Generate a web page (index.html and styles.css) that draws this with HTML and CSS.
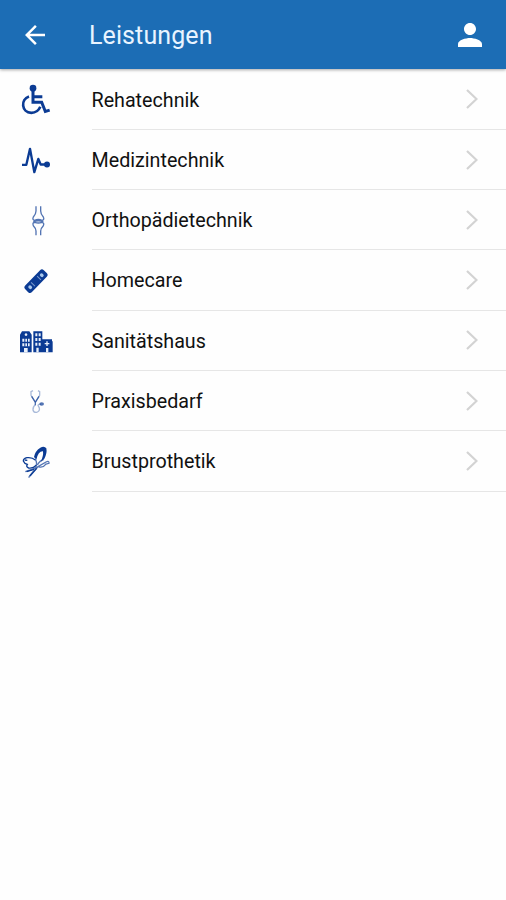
FILE: index.html
```html
<!DOCTYPE html>
<html lang="de">
<head>
    <meta charset="UTF-8">
    <title>Leistungen</title>
    <link rel="stylesheet" href="styles.css">
</head>
<body>
    <header class="toolbar">
        <svg class="back" viewBox="0 0 24 24"><path d="M20 11H7.830l5.590-5.590L12 4l-8 8 8 8 1.410-1.410L7.830 13H20v-2z"/></svg>
        <h1>Leistungen</h1>
        <svg class="user" viewBox="0 0 24 24"><path d="M12 12c2.210 0 4-1.790 4-4s-1.790-4-4-4-4 1.790-4 4 1.790 4 4 4zm0 2c-2.670 0-8 1.340-8 4v2h16v-2c0-2.660-5.330-4-8-4z"/></svg>
    </header>

    <ul class="services">
        <li>
            <svg class="icon" viewBox="0 -11.5 150 150">
                <circle class="fill" cx="69" cy="28" r="10"/>
                <path class="line" stroke-width="9" d="M69 34V70H95L106 98L119 94M70 54H97"/>
                <path class="line" stroke-width="8" d="M57 53C31 62 34 101 64 102Q83 102 91 84"/>
            </svg>
            <span class="name">Rehatechnik</span>
            <svg class="chevron" viewBox="0 0 12 20"><path d="M1 1l9.500 9L1 19"/></svg>
        </li>
        <li>
            <svg class="icon" viewBox="0 -9.500 150 150">
                <path class="line" stroke-width="7" stroke-linejoin="round" d="M36 80H49L60 32L73 102L85 62L92 79H108"/>
                <circle class="fill" cx="111" cy="79" r="9"/>
            </svg>
            <span class="name">Medizintechnik</span>
            <svg class="chevron" viewBox="0 0 12 20"><path d="M1 1l9.500 9L1 19"/></svg>
        </li>
        <li>
            <svg class="icon soft" viewBox="0 -9 150 150">
                <path class="line" stroke-width="4" d="M78 25V39Q78 48 70 57Q66 66 74 67Q85 61 96 67Q104 65 100 57Q92 48 92 39V25"/>
                <path class="line" stroke-width="4" d="M78 112V99Q78 91 70 83Q66 73 75 73Q85 77 95 73Q104 74 100 83Q92 91 92 99V112"/>
                <path class="line" stroke-width="5" d="M70 71Q85 65 100 71"/>
            </svg>
            <span class="name">Orthopädietechnik</span>
            <svg class="chevron" viewBox="0 0 12 20"><path d="M1 1l9.500 9L1 19"/></svg>
        </li>
        <li>
            <svg class="icon" viewBox="0 -7.500 150 150">
                <g transform="rotate(-46 78 68)">
                    <rect class="fill" x="38" y="54" width="80" height="28" rx="8"/>
                    <rect class="pale" x="48" y="62" width="10" height="12" rx="5"/>
                    <rect class="pale" x="98" y="62" width="10" height="12" rx="5"/>
                    <path class="gap" d="M65 60V76M91 60V76"/>
                </g>
            </svg>
            <span class="name">Homecare</span>
            <svg class="chevron" viewBox="0 0 12 20"><path d="M1 1l9.500 9L1 19"/></svg>
        </li>
        <li>
            <svg class="icon" viewBox="0 -8 150 150">
                <path class="fill" d="M30 48L36 38H58L65 48V101H30ZM70 38H97V101H70ZM95 62H126V68H128V101H95Z"/>
                <path class="white" d="M48 44a4 4 0 1 0 .1 0M37 60h22v9h-22zM37 74h22v9h-22zM42 88h11v13h-11z"/>
                <path class="fill" d="M43 58h3v26h-3zM51 58h3v26h-3z"/>
                <path class="white" d="M76 44h6v9h-6zM86 44h6v9h-6zM76 58h6v9h-6zM86 58h6v9h-6zM76 72h6v9h-6zM86 72h6v9h-6zM79 87h7v14h-7z"/>
                <path class="white" d="M109 68h4v5h5v4h-5v5h-4v-5h-5v-4h5zM108 88h7v13h-7z"/>
            </svg>
            <span class="name">Sanitätshaus</span>
            <svg class="chevron" viewBox="0 0 12 20"><path d="M1 1l9.500 9L1 19"/></svg>
        </li>
        <li>
            <svg class="icon" viewBox="0 -1 150 150">
                <path class="line pale-line" stroke-width="4" d="M69 43L63 46V57L76 78L89 57V46L84 43"/>
                <path class="line soft" stroke-width="4" d="M65 60L76 78L87 60M76 78V87"/>
                <path class="line pale-line" stroke-width="4" d="M76 85Q68 91 69 101Q71 109 80 108Q90 105 88 95L84 87Q86 82 93 84"/>
                <ellipse class="fill soft" cx="95" cy="83" rx="7" ry="5"/>
            </svg>
            <span class="name">Praxisbedarf</span>
            <svg class="chevron" viewBox="0 0 12 20"><path d="M1 1l9.500 9L1 19"/></svg>
        </li>
        <li>
            <svg class="icon" viewBox="0 0 150 150">
                <path class="fill" d="M72 60Q75 42 91 32Q103 26 109 34Q112 49 103 65L92 75Q101 56 99 43Q85 42 79 68Z"/>
                <path class="line" stroke-width="4" d="M76 69Q66 60 51 62Q40 64 40 72Q43 80 52 82Q47 90 56 93Q69 95 79 85"/>
                <path class="line soft" stroke-width="4" d="M76 67Q83 79 77 88M82 84Q91 69 101 68M46 104L61 99Q72 95 84 89L108 75Q118 70 117 79L105 82M56 122Q64 108 83 91M85 89Q98 94 107 82"/>
                <path class="line" stroke-width="4" d="M44 69L52 70M50 104L72 97M60 117L80 94"/>
            </svg>
            <span class="name">Brustprothetik</span>
            <svg class="chevron" viewBox="0 0 12 20"><path d="M1 1l9.500 9L1 19"/></svg>
        </li>
    </ul>
</body>
</html>
```
FILE: styles.css
```css
body {
    margin: 0;
    background-color: #fefefe;
    font-family: Roboto, "Liberation Sans", sans-serif;
}
.toolbar {
    display: flex;
    align-items: center;
    height: 69px;
    padding: 0 22px 0 20px;
    box-sizing: border-box;
    background-color: #1c6db5;
    color: #e9f4ff;
    box-shadow: 0 1px 3px rgba(0, 0, 0, 0.35);
}
.toolbar svg {
    width: 30px;
    height: 30px;
    fill: #fff;
}
.toolbar h1 {
    flex: 1;
    margin: 2px 0 0 39px;
    font-size: 25px;
    font-weight: 400;
    line-height: 30px;
    letter-spacing: 0.1px;
}
.toolbar .user {
    width: 36px;
    height: 36px;
    margin-right: -4px;
}
.services {
    margin: 0;
    padding: 0.6px 0 0;
    list-style: none;
}
.services li {
    display: flex;
    align-items: center;
    height: 60.3px;
    padding-left: 10px;
    background: linear-gradient(#e6e6e6, #e6e6e6) 92px 100% / 100% 1px no-repeat;
}
.icon {
    width: 50px;
    height: 50px;
    margin-right: 31.5px;
}
.name {
    flex: 1;
    margin-top: 0.6px;
    color: #111;
    font-size: 19.7px;
}
.chevron {
    width: 12px;
    height: 20px;
    margin-top: -1px;
    margin-right: 28px;
    fill: none;
    stroke: #d3d3d3;
    stroke-width: 2.2;
}
.fill {
    fill: #0b3b94;
}
.line {
    fill: none;
    stroke: #0b3b94;
}
.pale {
    fill: #a9c8ec;
}
.gap {
    fill: none;
    stroke: #7899cb;
    stroke-width: 3;
}
.white {
    fill: #e9f0fa;
}
.soft {
    opacity: 0.7;
}
.pale-line {
    opacity: 0.35;
}
```
